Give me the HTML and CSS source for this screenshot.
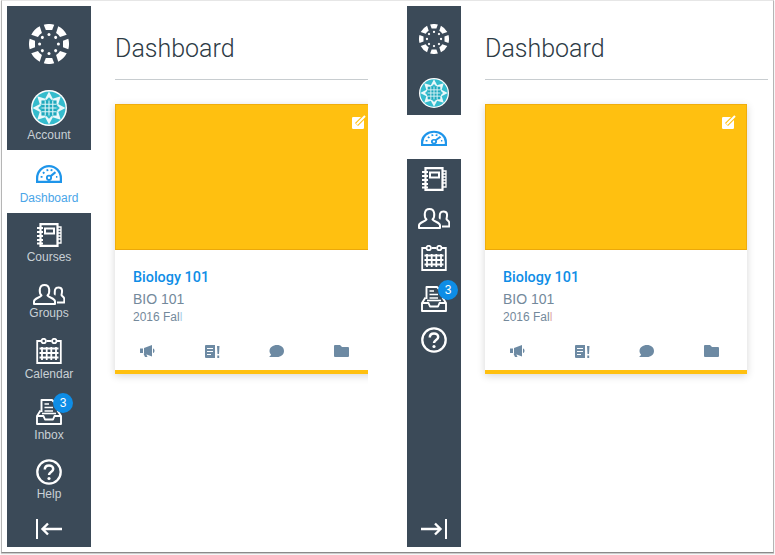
FILE: index.html
```html
<!DOCTYPE html>
<html lang="en">
<head>
<meta charset="utf-8">
<title>Dashboard</title>
<link rel="stylesheet" href="styles.css">
</head>
<body>
<svg class="defs" width="0" height="0" aria-hidden="true">
  <defs>
    <symbol id="i-logo" viewBox="-50 -50 100 100">
      <g>
        <path id="c" d="M-13-48.300A50 50 0 0 1 13-48.300L8-35H-8Z"/>
        <path id="b" d="M-15-47.700A50 50 0 0 1 15-47.700L7-32Q0-34-7-32Z" transform="rotate(45)"/>
        <use href="#c" transform="rotate(90)"/><use href="#b" transform="rotate(90)"/>
        <use href="#c" transform="rotate(180)"/><use href="#b" transform="rotate(180)"/>
        <use href="#c" transform="rotate(270)"/><use href="#b" transform="rotate(270)"/>
      </g>
      <g>
        <circle id="d" cx="0" cy="-23.500" r="3.800"/>
        <use href="#d" transform="rotate(45)"/><use href="#d" transform="rotate(90)"/><use href="#d" transform="rotate(135)"/>
        <use href="#d" transform="rotate(180)"/><use href="#d" transform="rotate(225)"/><use href="#d" transform="rotate(270)"/><use href="#d" transform="rotate(315)"/>
      </g>
    </symbol>
    <symbol id="i-avatar" viewBox="-50 -50 100 100">
      <circle r="50" fill="#fff"/>
      <circle r="46" fill="#35bccd"/>
      <g fill="#e9f8fa">
        <path id="p" d="M0-46L11-25 0-14-11-25Z"/>
        <use href="#p" transform="rotate(45)"/><use href="#p" transform="rotate(90)"/><use href="#p" transform="rotate(135)"/>
        <use href="#p" transform="rotate(180)"/><use href="#p" transform="rotate(225)"/><use href="#p" transform="rotate(270)"/><use href="#p" transform="rotate(315)"/>
      </g>
      <path d="M0-30L30 0 0 30-30 0Z" fill="#35bccd"/>
      <rect x="-21" y="-21" width="42" height="42" fill="#1fa9bd"/>
      <path d="M-21-10.500H21M-21 0H21M-21 10.500H21M-10.500-21V21M0-21V21M10.500-21V21" stroke="#dff5f8" stroke-width="3"/>
    </symbol>
    <symbol id="i-dash" viewBox="0 0 28 20" preserveAspectRatio="none">
      <path d="M1.200 18.800V15A12.800 12.800 0 0 1 26.800 15V18.800Z" fill="none" stroke="currentColor" stroke-width="2.400"/>
      <path d="M5 13.500H7M7.500 8.500L9 10M12 5.500L12.500 7.500M17 5.500L16.500 7.500M21.500 13.500H23" stroke="currentColor" stroke-width="2" fill="none"/>
      <circle cx="14" cy="14.500" r="2.300" fill="none" stroke="currentColor" stroke-width="2"/>
      <path d="M15.500 13L21 8.500" stroke="currentColor" stroke-width="2.200"/>
    </symbol>
    <symbol id="i-courses" viewBox="0 0 26 24" preserveAspectRatio="none">
      <g fill="none" stroke="currentColor" stroke-width="2.200">
        <path d="M4.500 3V1.100H21.500V22.900H4.500V21"/>
        <rect x="9" y="5.500" width="9" height="5" stroke-width="2"/>
        <path d="M1 5H7M1 9H7M1 13H7M1 17H7M1 20.500H7" stroke-width="1.800"/>
        <path d="M22 4H25V20H22M22 7H25M22 10H25M22 13H25M22 16H25" stroke-width="1.300"/>
        <path d="M4.500 3V21"/>
      </g>
    </symbol>
    <symbol id="i-groups" viewBox="0 0 32 21">
      <g fill="none" stroke="currentColor" stroke-width="2" stroke-linejoin="round">
        <path d="M1 20V17.500C1 14 7 14 8.500 11.500 6 9 5.500 1 11.500 1 17.500 1 17 9 14.500 11.500 16 14 22 14 22 17.500V20Z"/>
        <path d="M21.500 11C22.500 10 20 3.500 25.500 3.500 31 3.500 28.500 10 28.500 11 29.500 13 31.300 13 31.300 15V18.500H24"/>
      </g>
    </symbol>
    <symbol id="i-cal" viewBox="0 0 26 26">
      <g fill="none" stroke="currentColor" stroke-width="1.800">
        <path d="M5 3H1.200V25H24.800V3H21M10.500 3H15.500"/>
        <circle cx="7.700" cy="3" r="2.200"/>
        <circle cx="18.300" cy="3" r="2.200"/>
        <path d="M6 9V22M10.700 9V22M15.300 9V22M20 9V22M3.500 10.500H22.500M3.500 15H22.500M3.500 19.500H22.500" stroke-width="1.800"/>
      </g>
    </symbol>
    <symbol id="i-inbox" viewBox="0 0 26 26" preserveAspectRatio="none">
      <g fill="none" stroke="currentColor" stroke-width="1.900" stroke-linejoin="round">
        <path d="M5.500 13V1H16L19 4"/>
        <path d="M8.500 5H13M8.500 8.500H17M8.500 12H17" stroke-width="1.600"/>
        <path d="M4.500 11.500L1 17V25H25V17L21.500 11.500"/>
        <path d="M1 17H7.500L9 20.500H17L18.500 17H25"/>
        <path d="M6 14.500H20" stroke-width="1.600"/>
      </g>
    </symbol>
    <symbol id="i-help" viewBox="0 0 26 26">
      <circle cx="13" cy="13" r="11.700" fill="none" stroke="currentColor" stroke-width="2.300"/>
      <path d="M8.800 10.500C8.800 7.800 10.800 6.500 13 6.500 15.400 6.500 17.200 8 17.200 10 17.200 13 13 13 13 16" fill="none" stroke="currentColor" stroke-width="2.500"/>
      <circle cx="13" cy="19.500" r="1.600" fill="currentColor"/>
    </symbol>
    <symbol id="i-collapse" viewBox="0 0 26 20">
      <path d="M1 0V20" stroke="currentColor" stroke-width="2"/>
      <path d="M26 10H7M12 4.500L6.500 10 12 15.500" fill="none" stroke="currentColor" stroke-width="2.400"/>
    </symbol>
    <symbol id="i-expand" viewBox="0 0 26 20">
      <path d="M25 0V20" stroke="currentColor" stroke-width="2"/>
      <path d="M0 10H19M14 4.500L19.500 10 14 15.500" fill="none" stroke="currentColor" stroke-width="2.400"/>
    </symbol>
    <symbol id="i-edit" viewBox="0 0 14 14">
      <rect x="0" y="2" width="12" height="12" rx="1.200" fill="currentColor"/>
      <path d="M4.500 9.500L12.500 1.500" stroke="#ffc010" stroke-width="4.200"/>
      <path d="M4.800 9.200L13 1" stroke="currentColor" stroke-width="2"/>
    </symbol>
    <symbol id="i-mega" viewBox="0 0 15 12">
      <path d="M0 3.500H3V8H0ZM4 3L12 0V11.500L4 8.500ZM13 3.500C15 4 15 7.500 13 8ZM3.500 8.800H6L7.500 12H5Z" fill="currentColor"/>
    </symbol>
    <symbol id="i-doc" viewBox="0 0 15 13">
      <path fill-rule="evenodd" d="M1 0H10V13H1A1 1 0 0 1 0 12V1A1 1 0 0 1 1 0ZM2 3V4H8V3ZM2 6V7H8V6ZM2 9V10H6V9Z" fill="currentColor"/>
      <path d="M12 1H14.500L14 9H12.500ZM12.300 10.500H14.200V13H12.300Z" fill="currentColor"/>
    </symbol>
    <symbol id="i-chat" viewBox="0 0 15 13">
      <path d="M8 0C12 0 15 2.500 15 6 15 9.500 12 12 8 12H0C1.500 11 2 10 2 9.500 1 8.500 .5 7.300 .5 6 .5 2.500 4 0 8 0Z" fill="currentColor"/>
    </symbol>
    <symbol id="i-folder" viewBox="0 0 15 12">
      <path d="M0 1A1 1 0 0 1 1 0H6L8 2H14A1 1 0 0 1 15 3V11A1 1 0 0 1 14 12H1A1 1 0 0 1 0 11Z" fill="currentColor"/>
    </symbol>
  </defs>
</svg>

<div class="window">
  <section class="pane pane-open">
    <nav class="nav">
      <a class="nav-item nav-logo"><svg class="ico-logo"><use href="#i-logo"/></svg></a>
      <a class="nav-item nav-account"><svg class="ico-avatar"><use href="#i-avatar"/></svg><span>Account</span></a>
      <a class="nav-item nav-dash active"><svg class="ico-dash"><use href="#i-dash"/></svg><span>Dashboard</span></a>
      <a class="nav-item nav-courses"><svg class="ico-courses"><use href="#i-courses"/></svg><span>Courses</span></a>
      <a class="nav-item nav-groups"><svg class="ico-groups"><use href="#i-groups"/></svg><span>Groups</span></a>
      <a class="nav-item nav-cal"><svg class="ico-26"><use href="#i-cal"/></svg><span>Calendar</span></a>
      <a class="nav-item nav-inbox"><div class="icon-wrap"><svg class="ico-26"><use href="#i-inbox"/></svg><b class="badge">3</b></div><span>Inbox</span></a>
      <a class="nav-item nav-help"><svg class="ico-26"><use href="#i-help"/></svg><span>Help</span></a>
      <a class="nav-item nav-toggle"><svg class="ico-toggle"><use href="#i-collapse"/></svg></a>
    </nav>
    <main class="main">
      <h1 class="title">Dashboard</h1>
      <article class="card">
        <div class="card-hero"><svg class="ico-edit"><use href="#i-edit"/></svg></div>
        <div class="card-body">
          <a class="card-name">Biology 101</a>
          <div class="card-code">BIO 101</div>
          <div class="card-term">2016 Fal<span class="fade-blue">l</span></div>
        </div>
        <div class="card-actions">
          <svg class="ico-mega"><use href="#i-mega"/></svg>
          <svg class="ico-doc"><use href="#i-doc"/></svg>
          <svg class="ico-chat"><use href="#i-chat"/></svg>
          <svg class="ico-folder"><use href="#i-folder"/></svg>
        </div>
      </article>
    </main>
  </section>

  <section class="pane pane-closed">
    <nav class="nav nav-mini">
      <a class="mini-item mini-logo"><svg class="ico-logo-sm"><use href="#i-logo"/></svg></a>
      <a class="mini-item mini-account"><svg class="ico-avatar-sm"><use href="#i-avatar"/></svg></a>
      <a class="mini-item mini-dash active"><svg class="ico-dash-sm"><use href="#i-dash"/></svg></a>
      <a class="mini-item mini-courses"><svg class="ico-courses"><use href="#i-courses"/></svg></a>
      <a class="mini-item mini-groups"><svg class="ico-groups"><use href="#i-groups"/></svg></a>
      <a class="mini-item mini-cal"><svg class="ico-26"><use href="#i-cal"/></svg></a>
      <a class="mini-item mini-inbox"><div class="icon-wrap"><svg class="ico-26"><use href="#i-inbox"/></svg><b class="badge">3</b></div></a>
      <a class="mini-item mini-help"><svg class="ico-26"><use href="#i-help"/></svg></a>
      <a class="mini-item mini-toggle"><svg class="ico-toggle"><use href="#i-expand"/></svg></a>
    </nav>
    <main class="main">
      <h1 class="title">Dashboard</h1>
      <article class="card">
        <div class="card-hero"><svg class="ico-edit"><use href="#i-edit"/></svg></div>
        <div class="card-body">
          <a class="card-name">Biology 101</a>
          <div class="card-code">BIO 101</div>
          <div class="card-term">2016 Fal<span class="fade-red">l</span></div>
        </div>
        <div class="card-actions">
          <svg class="ico-mega"><use href="#i-mega"/></svg>
          <svg class="ico-doc"><use href="#i-doc"/></svg>
          <svg class="ico-chat"><use href="#i-chat"/></svg>
          <svg class="ico-folder"><use href="#i-folder"/></svg>
        </div>
      </article>
    </main>
  </section>
</div>
</body>
</html>
```

FILE: styles.css
```css
* { box-sizing: border-box; }
html, body { margin: 0; padding: 0; background: #fff; }
body { width: 775px; height: 555px; overflow: hidden; font-family: "Liberation Sans", Arial, sans-serif; }
.defs { position: absolute; }
svg { display: block; overflow: visible; }

.window {
  display: flex;
  width: 773px;
  height: 553px;
  margin-left: 1px;
  padding: 5px 0 5px 5px;
  background: #fff;
  border: 1px solid #b5b5b5;
  border-top-color: #e6e6e6;
  border-bottom-color: #8a8a8a;
  box-shadow: 0 1px 1px #ccc;
}
.pane { display: flex; height: 541px; flex: none; }
.pane-open { width: 400px; }
.pane-closed { flex: 1; }

.nav { display: flex; flex-direction: column; flex: none; width: 84px; background: #3b4a58; color: #fff; }
.nav-mini { width: 54px; }

.nav-item, .mini-item { display: flex; flex-direction: column; align-items: center; flex: none; }
.nav-item span { font-size: 12px; line-height: 14px; color: #c9d0d5; }
.icon-wrap { position: relative; }
.active { background: #fff; color: #1e95ea; }
.nav-item.active span { color: #4aa5e8; }

.nav-logo { height: 79px; padding-top: 18px; }
.nav-account { height: 65px; padding-top: 5px; }
.nav-account span { margin-top: 2px; }
.nav-dash { height: 63px; padding-top: 14px; }
.nav-dash span { margin-top: 8px; }
.nav-courses { height: 57px; padding-top: 10px; }
.nav-courses span { margin-top: 3px; }
.nav-groups { height: 60px; padding-top: 14px; }
.nav-groups span { margin-top: 1px; }
.nav-cal { height: 57px; padding-top: 8px; }
.nav-cal span { margin-top: 3px; }
.nav-inbox { height: 60px; padding-top: 12px; }
.nav-inbox span { margin-top: 3px; }
.nav-help { height: 60px; padding-top: 12px; }
.nav-help span { margin-top: 2px; }
.nav-toggle { height: 40px; padding-top: 12px; }

.ico-logo { width: 40px; height: 40px; fill: #fff; }
.ico-avatar { width: 36px; height: 36px; }
.ico-logo-sm { width: 30px; height: 30px; fill: #fff; }
.ico-avatar-sm { width: 30px; height: 30px; }
.ico-dash { width: 26px; height: 19px; }
.ico-dash-sm { width: 26px; height: 16px; }
.ico-26 { width: 26px; height: 26px; }
.ico-courses { width: 26px; height: 24px; }
.ico-groups { width: 32px; height: 21px; }
.ico-toggle { width: 26px; height: 20px; }

.badge {
  position: absolute;
  top: -6px;
  left: 17px;
  width: 20px;
  height: 20px;
  border-radius: 50%;
  background: #0e8de6;
  color: #fff;
  font-size: 12px;
  font-weight: 400;
  line-height: 20px;
  text-align: center;
}

.mini-logo { height: 64px; padding-top: 18px; }
.mini-account { height: 45px; padding-top: 8px; }
.mini-dash { height: 44px; padding-top: 15px; }
.mini-courses { height: 40px; padding-top: 8px; }
.mini-groups { height: 40px; padding-top: 9px; }
.mini-cal { height: 40px; padding-top: 6px; }
.mini-inbox { height: 41px; padding-top: 7px; }
.mini-help { height: 40px; padding-top: 7px; }
.mini-toggle { margin-top: auto; height: 28px; }

.main { flex: 1; min-width: 0; overflow: hidden; padding: 0 0 0 24px; }
.title {
  margin: 0 0 24px;
  height: 74px;
  padding-top: 27px;
  border-bottom: 1px solid #c8cdd0;
  color: #2d3b45;
  font-family: "Roboto", "Liberation Sans", sans-serif;
  font-size: 25px;
  line-height: 32px;
  font-weight: 300;
}
.pane-closed .main { padding-right: 5px; }
.pane-open .main { margin-right: 39px; }

.card {
  width: 262px;
  height: 270px;
  background: #fff;
  box-shadow: 0 2px 8px rgba(0, 0, 0, .16);
  border-bottom: 4px solid #ffc010;
  display: flex;
  flex-direction: column;
}
.card-hero {
  display: flex;
  justify-content: flex-end;
  height: 146px;
  padding: 10px 10px 0 0;
  background: #ffc010;
  border: 1px solid #f0ad0c;
  border-bottom-color: #eba80a;
}
.ico-edit { width: 14px; height: 14px; color: #fff; }
.card-body { padding: 20px 18px 0; height: 88px; }
.card-name { display: block; color: #0e8de6; font-family: "Roboto", "Liberation Sans", sans-serif; font-size: 14.4px; line-height: 16px; font-weight: 500; }
.card-code { color: #74899b; font-size: 14px; line-height: 16px; margin-top: 5px; }
.card-term { color: #74899b; font-size: 12px; line-height: 14px; margin-top: 3px; }
.fade-blue { color: #a9cfe8; }
.fade-red { color: #e0a9a9; }
.card-actions { display: flex; justify-content: space-between; align-items: center; padding: 0 28px 6px 25px; flex: 1; color: #6d8aa3; }
.ico-mega { width: 15px; height: 12px; }
.ico-doc { width: 15px; height: 13px; }
.ico-chat { width: 15px; height: 13px; }
.ico-folder { width: 15px; height: 12px; }
```
